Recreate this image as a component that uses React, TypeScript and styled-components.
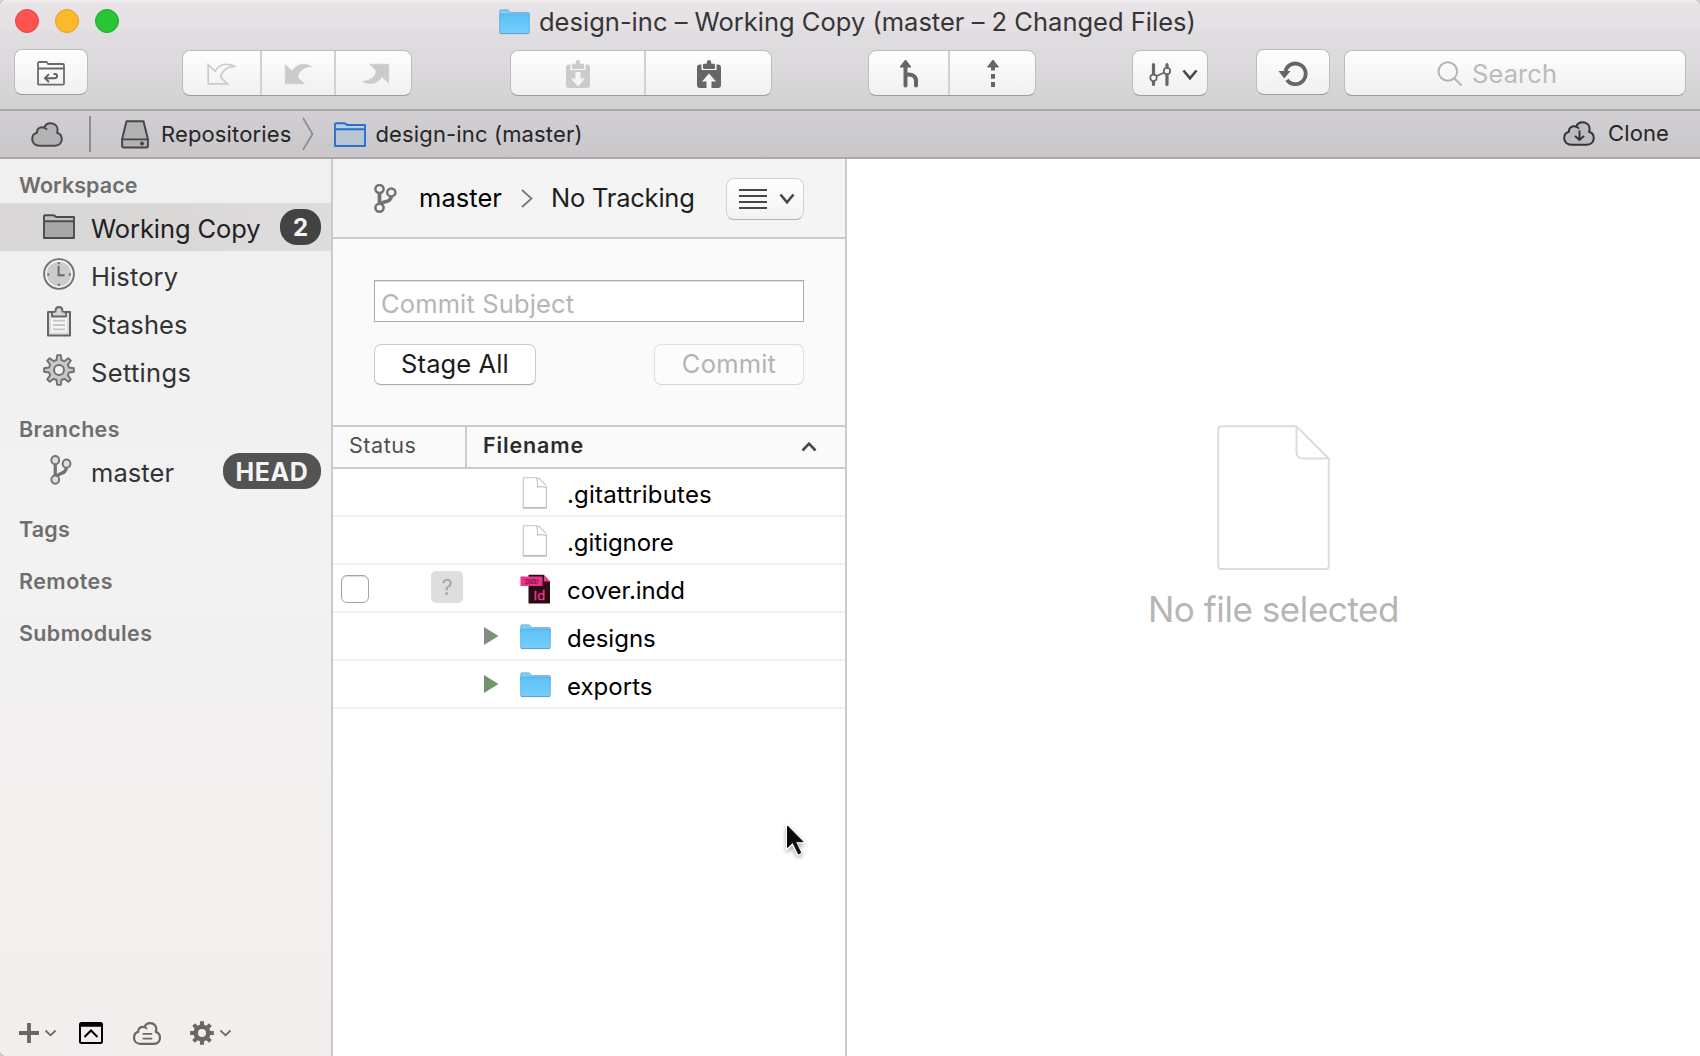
import React from 'react';
import styled, { createGlobalStyle, css } from 'styled-components';

const Global = createGlobalStyle`
  * { box-sizing: border-box; }
  html, body { margin: 0; padding: 0; background: #cfcaca; }
  body { font-family: Inter, "Liberation Sans", sans-serif; overflow: hidden; }
  button { font-family: inherit; }
  svg { display: block; flex: none; }
`;

const Window = styled.div`
  position: relative;
  display: flex;
  flex-direction: column;
  width: 1700px;
  height: 1056px;
  overflow: hidden;
  background: #fff;
  border-radius: 7px 7px 0 7px;
`;

const Label = styled.span<{ $size?: number; $ls?: number; $weight?: number; $color?: string; $drop?: number }>`
  font-size: ${p => p.$size ?? 25.5}px;
  font-weight: ${p => p.$weight ?? 400};
  letter-spacing: ${p => p.$ls ?? 0}px;
  color: ${p => p.$color ?? '#2b2a2b'};
  padding-top: ${p => p.$drop ?? 0}px;
  line-height: 30px;
  white-space: nowrap;
`;

/* ---------- title bar and toolbar ---------- */

const Chrome = styled.header`
  height: 111px;
  flex: none;
  border-bottom: 2px solid #a9a7aa;
  background: linear-gradient(#efedee 0, #e7e3e6 4px, #e5e0e4 28px, #dfdde0 34px, #dbd9db 70px, #d2d1d2 109px);
`;

const TitleBar = styled.div`
  display: flex;
  align-items: center;
  height: 43px;
  padding-left: 15px;
`;

const Lights = styled.div`
  display: flex;
  gap: 16px;
  width: 484px;
  padding-bottom: 1px;
`;

const Light = styled.span<{ $fill: string; $rim: string }>`
  width: 24px;
  height: 24px;
  border-radius: 50%;
  background: ${p => p.$fill};
  border: 1px solid ${p => p.$rim};
`;

const Title = styled.h1`
  display: flex;
  align-items: center;
  gap: 9px;
  margin: 0;
`;

const Toolbar = styled.div`
  display: flex;
  align-items: flex-start;
  padding: 7px 0 0 14px;
`;

const raised = css`
  background: linear-gradient(#fefefe, #f0f0f0);
  border: 1px solid #bebcbe;
  border-bottom-color: #9c9b9c;
  border-radius: 8px;
`;

const Segments = styled.div<{ $before?: number; $raise?: boolean }>`
  ${raised}
  display: flex;
  height: 46px;
  margin-left: ${p => p.$before ?? 0}px;
  margin-top: ${p => (p.$raise ? -1 : 0)}px;
`;

const Segment = styled.button<{ $w: number; $gap?: number; $left?: number }>`
  display: flex;
  align-items: center;
  justify-content: center;
  gap: ${p => p.$gap ?? 0}px;
  width: ${p => p.$w}px;
  padding: 2px 0 0 ${p => p.$left ?? 0}px;
  border: 0;
  background: none;
  & + & { border-left: 2px solid #d3d2d3; }
`;

const SearchField = styled.div`
  ${raised}
  display: flex;
  align-items: center;
  gap: 9px;
  width: 342px;
  height: 46px;
  margin-left: 14px;
  padding: 2px 0 0 92px;
`;

/* ---------- path bar ---------- */

const PathBar = styled.nav`
  display: flex;
  align-items: center;
  flex: none;
  height: 48px;
  padding: 0 31px;
  border-bottom: 2px solid #aaa8ab;
  background: linear-gradient(#d3cfd3, #cccbcf 50%, #cbc6c9);
`;

const Rule = styled.i`
  width: 2px;
  height: 36px;
  margin: 0 30px 0 26px;
  background: #8f8d90;
`;

const Crumb = styled.div<{ $gap: number; $after?: number }>`
  display: flex;
  align-items: center;
  gap: ${p => p.$gap}px;
  margin-right: ${p => p.$after ?? 0}px;
`;

const Push = styled.div`
  display: flex;
  align-items: center;
  gap: 13px;
  margin-left: auto;
  padding-bottom: 2px;
`;

/* ---------- sidebar ---------- */

const Body = styled.div`
  display: flex;
  flex: 1;
  min-height: 0;
`;

const Sidebar = styled.aside`
  display: flex;
  flex-direction: column;
  width: 333px;
  flex: none;
  padding-top: 8px;
  border-right: 2px solid #cbc9cb;
  background: linear-gradient(#f0f0f0 0, #f2f2f2 45%, #f2efee 80%, #f1eeed 100%);
`;

const Heading = styled.h2<{ $first?: boolean }>`
  display: flex;
  align-items: center;
  height: 36px;
  margin: ${p => (p.$first ? 0 : 16)}px 0 0;
  padding-left: 19px;
`;

const Item = styled.div<{ $on?: boolean }>`
  display: flex;
  align-items: center;
  height: 48px;
  padding-right: 10px;
  background: ${p => (p.$on ? 'linear-gradient(90deg, #d9d7d8, #dad7d7 50%, #dedddd)' : 'none')};
`;

const IconSlot = styled.span<{ $right?: number; $up?: number }>`
  display: flex;
  justify-content: center;
  width: 32px;
  margin: 0 16px 0 43px;
  padding: 0 0 ${p => p.$up ?? 2}px ${p => p.$right ?? 0}px;
`;

const Pill = styled.span<{ $bg: string; $w: number }>`
  display: flex;
  align-items: center;
  justify-content: center;
  width: ${p => p.$w}px;
  height: 36px;
  margin-left: auto;
  padding-top: 1px;
  border-radius: 17px;
  background: ${p => p.$bg};
`;

const Footer = styled.div`
  display: flex;
  align-items: center;
  height: 46px;
  margin-top: auto;
  padding-left: 19px;
`;

const FootButton = styled.button<{ $after?: number; $gap?: number }>`
  display: flex;
  align-items: center;
  gap: ${p => p.$gap ?? 5}px;
  padding: 0;
  border: 0;
  margin-right: ${p => p.$after ?? 0}px;
  background: none;
`;

/* ---------- middle pane ---------- */

const Middle = styled.main`
  display: flex;
  flex-direction: column;
  width: 514px;
  flex: none;
  border-right: 2px solid #cbc9cb;
`;

const BranchBar = styled.div`
  display: flex;
  align-items: center;
  height: 80px;
  padding: 0 41px;
  border-bottom: 2px solid #cbcbcb;
  background: #f4f4f4;
`;

const ViewButton = styled.button`
  ${raised}
  display: flex;
  align-items: center;
  gap: 12px;
  width: 78px;
  height: 42px;
  margin: 1px 0 0 auto;
  padding: 0 0 0 12px;
  border-color: #d3d3d3 #d3d3d3 #b4b4b4;
  background: linear-gradient(#fff, #f3f3f3);
`;

const CommitBox = styled.div`
  display: flex;
  flex-direction: column;
  gap: 22px;
  height: 188px;
  padding: 41px 41px 0;
  border-bottom: 2px solid #cbcbcb;
  background: #fafafa;
`;

const Subject = styled.div`
  display: flex;
  align-items: center;
  height: 42px;
  padding: 5px 0 0 6px;
  border: 1px solid #ababab;
  box-shadow: inset 0 1px 0 #e6e6e6;
  background: #fff;
`;

const Actions = styled.div`
  display: flex;
  justify-content: space-between;
`;

const PushButton = styled.button<{ $w: number; $off?: boolean }>`
  display: flex;
  align-items: center;
  justify-content: center;
  width: ${p => p.$w}px;
  height: 41px;
  padding: 0 0 1px;
  border: 1px solid ${p => (p.$off ? '#dedede' : '#cacaca')};
  border-bottom-color: ${p => (p.$off ? '#d4d4d4' : '#adadad')};
  border-radius: 7px;
  background: ${p => (p.$off ? '#fcfcfc' : '#fff')};
  box-shadow: ${p => (p.$off ? 'none' : '0 1px 1px rgba(0,0,0,.06)')};
`;

const HeadRow = styled.div`
  display: flex;
  height: 42px;
  border-bottom: 2px solid #cbcbcb;
  background: #fafafa;
`;

const HeadCell = styled.div<{ $w?: number; $pad: number }>`
  display: flex;
  align-items: center;
  justify-content: space-between;
  flex: ${p => (p.$w ? 'none' : 1)};
  width: ${p => (p.$w ? `${p.$w}px` : 'auto')};
  padding: 0 28px 4px ${p => p.$pad}px;
  & + & { border-left: 2px solid #cbcbcb; }
  & > svg { margin-top: 4px; }
`;

const FileRow = styled.div`
  display: grid;
  grid-template-columns: 134px 52px 48px 1fr;
  align-items: center;
  height: 48px;
  border-bottom: 2px solid #f1f1f1;
`;

const StatusCell = styled.div`
  display: flex;
  align-items: center;
  justify-content: space-between;
  padding: 0 4px 2px 8px;
`;

const Check = styled.span`
  width: 28px;
  height: 28px;
  margin-top: 4px;
  border: 1.5px solid #a3a3a3;
  border-radius: 6px;
  background: #fff;
  box-shadow: inset 0 1px 1px #ddd;
`;

const Unknown = styled.span`
  display: flex;
  align-items: center;
  justify-content: center;
  width: 32px;
  height: 32px;
  border-radius: 5px;
  background: #dedede;
`;

const Disclosure = styled.div`
  padding-left: 17px;
`;

const FileIcon = styled.div`
  display: flex;
  justify-content: center;
  width: 32px;
  padding-top: 2px;
`;

/* ---------- detail pane ---------- */

const Detail = styled.section`
  display: flex;
  flex: 1;
  flex-direction: column;
  align-items: center;
  gap: 23px;
  padding: 266px 0 0;
`;

const Pointer = styled.div`
  position: absolute;
  left: 780px;
  top: 819px;
  filter: drop-shadow(0 2px 2px rgba(0, 0, 0, 0.35));
`;

/* ---------- icons ---------- */

type SvgProps = { w: number; h: number; children: React.ReactNode };
const Svg = ({ w, h, children }: SvgProps) => (
  <svg width={w} height={h} viewBox={`0 0 ${w} ${h}`} fill="none">{children}</svg>
);

const MacFolder = () => (
  <Svg w={31} h={26}>
    <defs>
      <linearGradient id="mf" x1="0" y1="0" x2="0" y2="1">
        <stop offset="0" stopColor="#5cc1f7" /><stop offset="1" stopColor="#75cdfc" />
      </linearGradient>
    </defs>
    <path d="M.7 5V2Q.7.8 2 .8H8.600Q9.500.8 10 1.500L11.700 3.500H29Q30.300 3.500 30.300 5V8H.7Z" fill="#7dcbf5" stroke="#62aeda" strokeWidth=".8" />
    <path d="M.7 6.200Q.7 5.200 1.700 5.200H29.300Q30.300 5.200 30.300 6.200V23.200Q30.300 24.500 29 24.500H2Q.7 24.500.7 23.200Z" fill="url(#mf)" stroke="#56a9d8" strokeWidth=".8" />
    <path d="M1.200 24.600H29.800" stroke="#5f9fc4" strokeWidth="1" />
  </Svg>
);

const LineFolder = ({ stroke, fill, band }: { stroke: string; fill: string; band: string }) => (
  <Svg w={32} h={25}>
    <path d="M1 7V2.500Q1 1.200 2.300 1.200H10.500Q11.600 1.200 12.200 2L13 3H29.700Q31 3 31 4.200V7Z" fill={band} />
    <path d="M1 7H31V24H1Z" fill={fill} />
    <path d="M1 24V2.500Q1 1.200 2.300 1.200H10Q11.500 1.200 13.200 3H31V24ZM1 7.300H31" stroke={stroke} strokeWidth="1.900" strokeLinejoin="round" />
  </Svg>
);

const ReturnFolder = () => (
  <Svg w={28} h={25}>
    <path d="M1 23.600V2.200Q1 1 2.200 1H9Q9.800 1 10.300 1.700L11.200 3H25.800Q27 3 27 4.200V22.400Q27 23.600 25.800 23.600H2Q1 23.600 1 22.400M1 7.500H27" stroke="#6b6b6b" strokeWidth="1.800" />
    <path d="M16.500 13H18Q20 13 20 15T18 17.200H9" stroke="#5e5e5e" strokeWidth="1.900" />
    <path d="M12 13.200L8 17.200L12 21.200" stroke="#5e5e5e" strokeWidth="1.900" />
  </Svg>
);

const curvedArrow = 'M1.200 1.800V20.800H20.500L13.800 14.400C14 9.500 18.500 4 27.600 3.400C22 .2 12.500 0 8.200 8.200Z';
const CurvedArrow = ({ outline, flip }: { outline?: boolean; flip?: boolean }) => (
  <Svg w={29} h={22}>
    <path d={curvedArrow} transform={flip ? 'rotate(180 14.500 11)' : undefined} fill={outline ? 'none' : '#cbcbcb'} stroke="#cbcbcb" strokeWidth={outline ? 1.700 : .6} />
  </Svg>
);

const Stash = ({ up }: { up?: boolean }) => (
  <Svg w={24} h={28}>
    <path
      fillRule="evenodd"
      d={up
        ? 'M3 4.500H4.500V10H19.500V4.500H21Q24 4.500 24 7.500V25Q24 28 21 28H14.500V21.500H19L12 13.500L5 21.500H9.500V28H3Q0 28 0 25V7.500Q0 4.500 3 4.500Z'
        : 'M3 4.500H4.500V10H19.500V4.500H21Q24 4.500 24 7.500V25Q24 28 21 28H3Q0 28 0 25V7.500Q0 4.500 3 4.500ZM9.500 12V18.500H5L12 26.500L19 18.500H14.500V12Z'}
      fill={up ? '#666' : '#cbcbcb'}
    />
    <path d="M6 4.500Q6 3.800 7 3.800H9.800V2Q10 0 12 0T14.200 2V3.800H17Q18 3.800 18 4.500V8Q18 9 17 9H7Q6 9 6 8Z" fill={up ? '#666' : '#cbcbcb'} />
  </Svg>
);

const MergeArrow = () => (
  <Svg w={18} h={28}>
    <path d="M5.500 0L11 7H0Z" fill="#666" stroke="#666" strokeLinejoin="round" />
    <path d="M5.500 6V25.500M5.500 14.500H9Q16 15 16 21V25.500" stroke="#666" strokeWidth="4" strokeLinecap="round" />
  </Svg>
);

const DashedArrow = () => (
  <Svg w={14} h={28}>
    <path d="M7 0L12.500 7H1.500Z" fill="#666" stroke="#666" strokeLinejoin="round" />
    <path d="M7 6V10.500M7 14V18.800M7 22V27" stroke="#666" strokeWidth="4" />
  </Svg>
);

const Flow = () => (
  <Svg w={23} h={25}>
    <path d="M4.500 2.500V22.500M18 2.500V22.500" stroke="#666" strokeWidth="3.200" strokeLinecap="round" />
    <path d="M4.500 15.600L18 9.200" stroke="#666" strokeWidth="1.700" />
    <circle cx="4.500" cy="15.800" r="3.200" fill="#fafafa" stroke="#666" strokeWidth="1.700" />
    <circle cx="18" cy="9" r="3.200" fill="#fafafa" stroke="#666" strokeWidth="1.700" />
  </Svg>
);

const Chevron = ({ w = 16, h = 10, up, color = '#474747', t = 2.6 }: { w?: number; h?: number; up?: boolean; color?: string; t?: number }) => (
  <Svg w={w} h={h}>
    <path d={up ? `M1.500 ${h - 1.500}L${w / 2} 1.700L${w - 1.500} ${h - 1.500}` : `M1.500 1.500L${w / 2} ${h - 1.700}L${w - 1.500} 1.500`} stroke={color} strokeWidth={t} />
  </Svg>
);

const Refresh = () => (
  <Svg w={30} h={27}>
    <path d="M7.500 11A10.300 10.300 0 1 1 9 19.800" stroke="#666" strokeWidth="3.800" />
    <path d="M.5 11H12.500L6.300 18.500Z" fill="#666" />
  </Svg>
);

const Magnifier = () => (
  <Svg w={26} h={26}>
    <circle cx="10.800" cy="10.500" r="9.300" stroke="#b4b4b4" strokeWidth="2" />
    <path d="M17 17L24.500 24.500" stroke="#b4b4b4" strokeWidth="2" />
  </Svg>
);

const cloudPath = 'M8.500 23.700C4 23.700 1.200 20.800 1.200 17C1.200 13.500 3 11.400 6 10.700C5.600 7 9 4.300 13.300 5.600C14.200 2.700 17 1.200 20 1.300C24 1.400 27 4.500 26.600 8C26.500 9.200 26.200 10 26 10.700C29.300 11.600 30.800 14.200 30.800 17.100C30.800 21 28 23.700 24 23.700Z';
const Cloud = ({ fill, stroke, small, children }: { fill: string; stroke: string; small?: boolean; children?: React.ReactNode }) => (
  <svg width={small ? 28 : 32} height={small ? 23 : 25} viewBox="0 0 32 25" preserveAspectRatio="none" fill="none">
    <path d={cloudPath} fill={fill} stroke={stroke} strokeWidth={small ? 2.5 : 2} strokeLinejoin="round" />
    <path d="M13 5.600Q14.600 6 15.600 7.100" stroke={stroke} strokeWidth="1.800" strokeLinecap="round" />
    {children}
  </svg>
);

const Drive = () => (
  <Svg w={28} h={29}>
    <path d="M5.500 1.200H22.500L26.900 19V26Q26.900 27.500 25.400 27.500H2.600Q1.100 27.500 1.100 26V19Z" fill="#b3b2b3" stroke="#474747" strokeWidth="2" strokeLinejoin="round" />
    <path d="M1.500 19.300H26.500" stroke="#474747" strokeWidth="1.800" />
    <circle cx="21" cy="23.400" r="2" fill="#474747" />
  </Svg>
);

const Branch = ({ hollow, bold }: { hollow: string; bold?: boolean }) => (
  <svg width={bold ? 23 : 22} height={bold ? 29 : 30} viewBox="0 0 23 30" preserveAspectRatio="none" fill="none">
    <path d={bold ? 'M5.500 8V22M17.200 12C17.400 21 6.500 16 6 23' : 'M5.500 8V22M17.200 12C17.400 20 6.500 17.500 6 23'} stroke="#727272" strokeWidth={bold ? 3.8 : 3.4} />
    {[[5.500, 5.200], [17.300, 8.700], [5.500, 24.600]].map(([x, y]) => (
      <circle key={y} cx={x} cy={y} r="4.100" fill={hollow} stroke="#727272" strokeWidth={bold ? 2.5 : 2} />
    ))}
  </svg>
);

const Clock = () => (
  <Svg w={32} h={32}>
    <circle cx="16" cy="16" r="14.900" fill="#f4f4f4" stroke="#717171" strokeWidth="1.900" />
    <circle cx="16" cy="16" r="12.200" fill="#cbcbcb" />
    <path d="M15.600 8V17.300H21.500" stroke="#666" strokeWidth="1.900" />
    <path d="M15.800 4.300V6.300M15.800 25.800V27.800M4.300 16.500H6.300M25.800 16.500H27.800" stroke="#666" strokeWidth="1.900" />
  </Svg>
);

const Clipboard = () => (
  <Svg w={24} h={31}>
    <path d="M1 6H23V29.500H1Z" fill="#dcdcdc" stroke="#666" strokeWidth="2" strokeLinejoin="round" />
    <path d="M4 9H20V26.500H4Z" fill="#f4f4f4" />
    <path d="M5 10.500V7.500Q5.200 5.600 8.500 5.600V4.500Q8.800 1 12 1T15.500 4.500V5.600Q18.800 5.600 19 7.500V10.500Z" fill="#d4d4d4" stroke="#666" strokeWidth="1.900" strokeLinejoin="round" />
    <path d="M6 14.600H18M6 19H18M6 23.400H18" stroke="#c4c4c4" strokeWidth="1.800" />
  </Svg>
);

/** Outline of an eight-toothed gear centred on (c, c). */
function gearPath(c: number, outer: number, root: number, tip = 0.13, base = 0.2) {
  const pts: string[] = [];
  for (let i = 0; i < 8; i++) {
    const a = (i * Math.PI) / 4;
    [[-base, root], [-tip, outer], [tip, outer], [base, root]].forEach(([d, r]) =>
      pts.push(`${(c + r * Math.sin(a + d)).toFixed(2)} ${(c - r * Math.cos(a + d)).toFixed(2)}`));
  }
  return `M${pts.join('L')}Z`;
}

const Gear = () => (
  <Svg w={32} h={32}>
    <path d={gearPath(16, 15, 10.300, 0.12, 0.24)} fill="#c9c9c9" stroke="#717171" strokeWidth="1.900" strokeLinejoin="round" />
    <circle cx="16" cy="16" r="5" fill="#f3f3f3" stroke="#717171" strokeWidth="2" />
  </Svg>
);

const SolidGear = () => (
  <Svg w={24} h={24}>
    <path fillRule="evenodd" d={`${gearPath(12, 12, 8.600, 0.17, 0.24)}M12 8A4 4 0 1 0 12 16A4 4 0 1 0 12 8Z`} fill="#6a6767" />
  </Svg>
);

const Page = () => (
  <Svg w={26} h={32}>
    <path d="M14.500.8H2Q1.200.8 1.200 1.600V30.500H24.400V10.500C23.500 6.500 18 1.200 14.500.8Z" fill="#fff" stroke="#c2c2c2" strokeWidth="1.100" />
    <path d="M1 31H24.600" stroke="#b0b0b0" strokeWidth="1.200" />
    <path d="M14.500 1C15.800 4 15.800 6 15.600 10Q20.500 8.800 24.200 11" fill="#fff" stroke="#c2c2c2" strokeWidth="1.100" />
  </Svg>
);

const InDesign = () => (
  <Svg w={31} h={31}>
    <path d="M8.500.8H23.500L30 7.500V29.500H8.500Z" fill="#2a0d14" />
    <path d="M24 1L30.300 7.500H24Z" fill="#ee3f86" />
    <rect x=".5" y="2.500" width="22" height="9.500" fill="#ee3289" />
    <text x="4.500" y="9.600" fontSize="7" fontFamily="Liberation Mono, monospace" fontWeight="700" textLength="14" fill="#8d1f4c">INDD</text>
    <text x="13.500" y="25.500" fontSize="13" fontFamily="Open Sans, sans-serif" fontWeight="400" stroke="#ff3f94" strokeWidth=".3" fill="#ff3f94">Id</text>
  </Svg>
);

const Triangle = ({ id, from }: { id: string; from: string }) => (
  <Svg w={15} h={18}>
    <defs><linearGradient id={id}><stop offset="0" stopColor={from} /><stop offset="1" stopColor="#6d9b6b" /></linearGradient></defs>
    <path d="M0 0L14.500 9L0 18Z" fill={`url(#${id})`} />
  </Svg>
);

/* ---------- data ---------- */

const workspace = [
  { text: 'Working Copy', ls: -0.08, icon: <LineFolder stroke="#4c4c4c" fill="#a9a8a8" band="#c4c3c3" />, badge: '2' },
  { text: 'History', ls: 0.12, icon: <Clock /> },
  { text: 'Stashes', ls: 0.07, icon: <Clipboard />, up: 4 },
  { text: 'Settings', ls: 0.33, icon: <Gear /> },
];

const sections = [{ text: 'Tags', ls: 0.2 }, { text: 'Remotes', ls: 0.45 }, { text: 'Submodules', ls: 0.36 }];

const files = [
  { name: '.gitattributes', ls: 0.18, icon: <Page /> },
  { name: '.gitignore', ls: -0.04, icon: <Page /> },
  { name: 'cover.indd', ls: -0.06, icon: <InDesign />, status: '?' },
  { name: 'designs', ls: 0, icon: <MacFolder />, fold: '#8f838c' },
  { name: 'exports', ls: 0.03, icon: <MacFolder />, fold: '#74906f' },
];

const HeadingText = ({ text, ls }: { text: string; ls: number }) => (
  <Label $size={21.5} $weight={600} $ls={ls} $color="#6f6e6e">{text}</Label>
);

export default function App() {
  return (
    <>
      <Global />
      <Window>
        <Chrome>
          <TitleBar>
            <Lights>
              <Light $fill="#fe544f" $rim="#e2463f" />
              <Light $fill="#fdb92c" $rim="#dfa023" />
              <Light $fill="#28c536" $rim="#1fa92b" />
            </Lights>
            <Title>
              <MacFolder />
              <Label $ls={0.01} $color="#363536">design-inc – Working Copy (master – 2 Changed Files)</Label>
            </Title>
          </TitleBar>
          <Toolbar>
            <Segments $raise><Segment $w={72}><ReturnFolder /></Segment></Segments>
            <Segments $before={94}>
              <Segment $w={77}><CurvedArrow outline /></Segment>
              <Segment $w={74}><CurvedArrow /></Segment>
              <Segment $w={77} $left={3}><CurvedArrow flip /></Segment>
            </Segments>
            <Segments $before={98}>
              <Segment $w={133}><Stash /></Segment>
              <Segment $w={127}><Stash up /></Segment>
            </Segments>
            <Segments $before={96}>
              <Segment $w={79}><MergeArrow /></Segment>
              <Segment $w={87}><DashedArrow /></Segment>
            </Segments>
            <Segments $before={96}><Segment $w={74} $gap={10} $left={6}><Flow /><Chevron w={16} h={11} /></Segment></Segments>
            <Segments $before={48} $raise><Segment $w={72}><Refresh /></Segment></Segments>
            <SearchField><Magnifier /><Label $ls={0.09} $color="#bbb">Search</Label></SearchField>
          </Toolbar>
        </Chrome>

        <PathBar>
          <Cloud fill="#b3b2b4" stroke="#4a4a4a" />
          <Rule />
          <Crumb $gap={12} $after={11}>
            <Drive />
            <Label $size={22} $ls={0.13} $color="#262526">Repositories</Label>
          </Crumb>
          <Crumb $gap={20}>
            <Svg w={12} h={34}><path d="M1 1L10.500 17L1 33" stroke="#8d8b8e" strokeWidth="1.700" /></Svg>
            <Crumb $gap={9}>
              <LineFolder stroke="#2a70c8" fill="#b9c5d3" band="#b4cfea" />
              <Label $size={22} $ls={0.15} $color="#262526">design-inc (master)</Label>
            </Crumb>
          </Crumb>
          <Push>
            <Cloud fill="#bdbcc0" stroke="#343434">
              <path d="M16.500 9.500V18.500M12 15L16.500 19L21 15" stroke="#343434" strokeWidth="2" />
            </Cloud>
            <Label $size={22} $ls={0.1} $color="#262526">Clone</Label>
          </Push>
        </PathBar>

        <Body>
          <Sidebar>
            <Heading $first><HeadingText text="Workspace" ls={0.05} /></Heading>
            {workspace.map(w => (
              <Item key={w.text} $on={!!w.badge}>
                <IconSlot $up={w.up}>{w.icon}</IconSlot>
                <Label $ls={w.ls} $drop={3} $color={w.badge ? '#212021' : '#333'}>{w.text}</Label>
                {w.badge && <Pill $bg="#434343" $w={41}><Label $size={24} $weight={700} $color="#f4f4f4">{w.badge}</Label></Pill>}
              </Item>
            ))}
            <Heading><HeadingText text="Branches" ls={0.32} /></Heading>
            <Item>
              <IconSlot $right={3}><Branch hollow="#dedede" /></IconSlot>
              <Label $ls={0.08} $drop={3} $color="#333">master</Label>
              <Pill $bg="#535353" $w={98}><Label $size={25} $weight={700} $ls={0.6} $color="#f4f4f4">HEAD</Label></Pill>
            </Item>
            {sections.map(s => <Heading key={s.text}><HeadingText {...s} /></Heading>)}
            <Footer>
              <FootButton $after={22}>
                <Svg w={20} h={20}><path d="M10 0V20M0 10H20" stroke="#6a6767" strokeWidth="3.800" /></Svg>
                <Chevron w={13} h={8} color="#6a6767" t={1.8} />
              </FootButton>
              <FootButton $after={30}>
                <Svg w={24} h={22}>
                  <rect x="1" y="1" width="22" height="20" rx="1.500" stroke="#000" strokeWidth="2" />
                  <path d="M1 3H23" stroke="#000" strokeWidth="3.600" />
                  <path d="M5.500 15L12 8.500L18.500 15" stroke="#000" strokeWidth="2" />
                </Svg>
              </FootButton>
              <FootButton $after={29}>
                <Cloud small fill="none" stroke="#6a6767">
                  <path d="M11 13H22M11 18H22" stroke="#6a6767" strokeWidth="1.900" />
                </Cloud>
              </FootButton>
              <FootButton><SolidGear /><Chevron w={13} h={8} color="#6a6767" t={1.8} /></FootButton>
            </Footer>
          </Sidebar>

          <Middle>
            <BranchBar>
              <Crumb $gap={22} $after={19}>
                <Branch hollow="#f4f4f4" bold />
                <Label $ls={0.05} $color="#000">master</Label>
              </Crumb>
              <Crumb $gap={18}>
                <Svg w={12} h={19}><path d="M1 1L10.500 9.500L1 18" stroke="#777" strokeWidth="1.800" /></Svg>
                <Label $ls={-0.22} $color="#1d1d1d">No Tracking</Label>
              </Crumb>
              <ViewButton>
                <Svg w={28} h={20}><path d="M0 1H28M0 7H28M0 13H28M0 19H28" stroke="#474747" strokeWidth="2" /></Svg>
                <Chevron w={16} h={11} />
              </ViewButton>
            </BranchBar>
            <CommitBox>
              <Subject><Label $ls={0.13} $color="#b6b6b6">Commit Subject</Label></Subject>
              <Actions>
                <PushButton $w={162}><Label $ls={0.12} $color="#1d1d1d">Stage All</Label></PushButton>
                <PushButton $w={150} $off><Label $ls={0.2} $color="#b3b3b3">Commit</Label></PushButton>
              </Actions>
            </CommitBox>
            <HeadRow>
              <HeadCell $w={132} $pad={16}><Label $size={21.5} $ls={0.55} $color="#4f4f4f">Status</Label></HeadCell>
              <HeadCell $pad={16}><Label $size={21.5} $weight={600} $ls={0.85} $color="#2c2b2c">Filename</Label><Chevron w={16} h={10} up /></HeadCell>
            </HeadRow>
            {files.map(f => (
              <FileRow key={f.name}>
                <StatusCell>
                  {f.status && <><Check /><Unknown><Label $size={22} $color="#a6a6a6">{f.status}</Label></Unknown></>}
                </StatusCell>
                <Disclosure>{f.fold && <Triangle id={`fold-${f.name}`} from={f.fold} />}</Disclosure>
                <FileIcon>{f.icon}</FileIcon>
                <Label $size={24} $ls={f.ls} $drop={5} $color="#000">{f.name}</Label>
              </FileRow>
            ))}
          </Middle>

          <Detail>
            <Svg w={113} h={146}>
              <path d="M4 1.200H79.500L111.800 33.500V141Q111.800 144 109 144H4Q1.200 144 1.200 141V4Q1.200 1.200 4 1.200Z" stroke="#dcdcdc" strokeWidth="2" />
              <path d="M79.500 1.200V27.500Q80 33.200 85.500 33.500H111.800" stroke="#dcdcdc" strokeWidth="2" />
            </Svg>
            <Label $size={35} $ls={-0.43} $color="#b6b6b6">No file selected</Label>
          </Detail>
        </Body>

        <Pointer>
          <Svg w={32} h={42}>
            <path d="M6 4V32L12.200 26.500L17.500 37L22.500 34.500L17.500 24.500H26Z" fill="#fff" />
            <path d="M7.500 7V28.500L12.800 23.500L18.500 35L20.800 33.800L15.500 22.700H23Z" fill="#0b0b0b" stroke="#0b0b0b" />
          </Svg>
        </Pointer>
      </Window>
    </>
  );
}
